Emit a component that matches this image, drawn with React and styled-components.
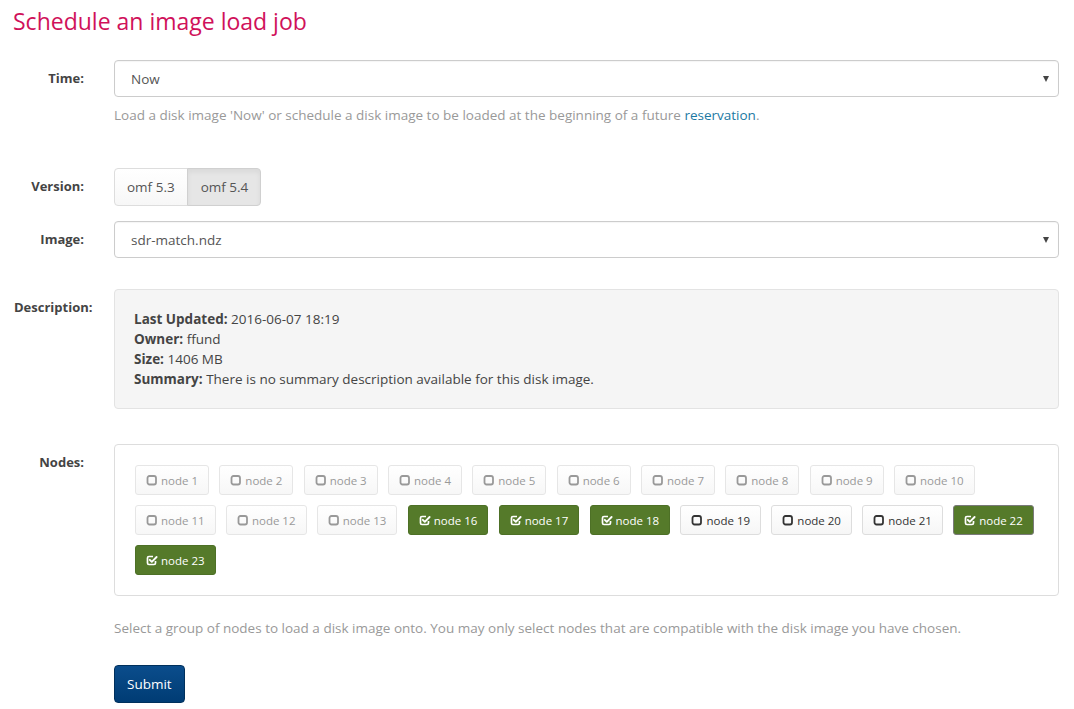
import React, { useState } from "react";
import styled, { createGlobalStyle, css } from "styled-components";

const GlobalStyle = createGlobalStyle`
  html, body {
    margin: 0;
    padding: 0;
    background: #fff;
  }
  body {
    font-family: "Open Sans", "Noto Sans", sans-serif;
    font-size: 13.5px;
    line-height: 20px;
    color: #555;
  }
  * {
    box-sizing: border-box;
  }
`;

const Page = styled.div`
  padding: 8px 15px 0 14px;
`;

const Title = styled.h2`
  margin: 0 0 26px -1px;
  font-size: 23px;
  line-height: 26px;
  font-weight: 400;
  color: #d0115a;
`;

const Row = styled.div`
  display: grid;
  grid-template-columns: 70px 1fr;
  column-gap: 30px;
  margin-top: ${({ $gap }) => $gap || 0}px;
`;

const Label = styled.label`
  padding-top: 8px;
  text-align: right;
  white-space: nowrap;
  font-weight: 700;
  font-size: 13px;
  color: #444;
`;

const Field = styled.div`
  min-width: 0;
`;

const Select = styled.div`
  display: flex;
  align-items: center;
  justify-content: space-between;
  height: 37px;
  padding: 0 9px 0 16px;
  border: 1px solid #ccc;
  border-radius: 4px;
  background: #fff;
  color: #555;
  box-shadow: inset 0 1px 1px rgba(0, 0, 0, 0.04);
  cursor: pointer;
`;

const Caret = styled.span`
  width: 0;
  height: 0;
  border-left: 3.5px solid transparent;
  border-right: 3.5px solid transparent;
  border-top: 6px solid #444;
`;

const Help = styled.p`
  margin: ${({ $top }) => $top || 8}px 0 0;
  color: #999;
`;

const Link = styled.a`
  color: #1b79a3;
  text-decoration: none;
`;

const Group = styled.div`
  display: inline-flex;
`;

const GroupButton = styled.button`
  height: 38px;
  padding: 0 12px;
  font: inherit;
  color: #555;
  border: 1px solid #ddd;
  background: ${({ $active }) =>
    $active ? "#e6e6e6" : "linear-gradient(#fff, #f7f7f7)"};
  box-shadow: ${({ $active }) =>
    $active ? "inset 0 3px 5px rgba(0,0,0,0.06)" : "none"};
  border-color: ${({ $active }) => ($active ? "#d0d0d0" : "#ddd")};
  cursor: pointer;
  &:first-child {
    border-radius: 4px 0 0 4px;
  }
  &:last-child {
    border-radius: 0 4px 4px 0;
    margin-left: -1px;
    padding: 0 12px 0 13px;
  }
`;

const Well = styled.div`
  padding: 19px 19px;
  background: #f5f5f5;
  border: 1px solid #e3e3e3;
  border-radius: 4px;
  color: #444;
`;

const Key = styled.b`
  font-weight: 700;
  color: #444;
`;

const NodeBox = styled.div`
  display: flex;
  flex-wrap: wrap;
  gap: 10px 10.3px;
  padding: 20px;
  border: 1px solid #ddd;
  border-radius: 4px;
  background: #fff;
`;

const NodeButton = styled.button`
  display: inline-flex;
  align-items: center;
  gap: 3px;
  height: 30px;
  padding: 0 10px;
  font-family: inherit;
  font-size: 11.5px;
  border-radius: 3px;
  cursor: pointer;
  ${({ $state }) =>
    $state === "on"
      ? css`
          color: #fff;
          background: #557a2a;
          border: 1px solid #4d7026;
        `
      : $state === "focus"
      ? css`
          color: #fff;
          background: #557a2a;
          border: 1px solid #7a7a7a;
        `
      : $state === "off"
      ? css`
          color: #333;
          background: linear-gradient(#fff, #f6f6f6);
          border: 1px solid #ddd;
        `
      : css`
          color: #999;
          background: linear-gradient(#fff, #f7f7f7);
          border: 1px solid #e6e6e6;
          cursor: not-allowed;
        `}
`;

const Submit = styled.button`
  height: 38px;
  margin-top: 27px;
  padding: 0 12px;
  font: inherit;
  color: #fff;
  border: 1px solid #00305c;
  border-radius: 4px;
  background: linear-gradient(#0b4d8c, #003c74);
  cursor: pointer;
`;

const BoxIcon = ({ checked }) => (
  <svg width="12" height="12" viewBox="0 0 12 12" fill="none">
    {checked ? (
      <>
        <path
          d="M7 2.5 H3 a1.5 1.5 0 0 0 -1.5 1.5 V9 a1.5 1.5 0 0 0 1.5 1.5 H8 a1.5 1.5 0 0 0 1.5 -1.5 V7"
          stroke="currentColor"
          strokeWidth="1.7"
        />
        <path
          d="M3.8 5.8 L5.8 7.8 L10.6 3"
          stroke="currentColor"
          strokeWidth="1.9"
          strokeLinecap="round"
          strokeLinejoin="round"
        />
      </>
    ) : (
      <rect
        x="1.5"
        y="2"
        width="8.5"
        height="8.5"
        rx="2"
        stroke="currentColor"
        strokeWidth="1.8"
      />
    )}
  </svg>
);

const nodes = [
  [1, "disabled"],
  [2, "disabled"],
  [3, "disabled"],
  [4, "disabled"],
  [5, "disabled"],
  [6, "disabled"],
  [7, "disabled"],
  [8, "disabled"],
  [9, "disabled"],
  [10, "disabled"],
  [11, "disabled"],
  [12, "disabled"],
  [13, "disabled"],
  [16, "on"],
  [17, "on"],
  [18, "on"],
  [19, "off"],
  [20, "off"],
  [21, "off"],
  [22, "focus"],
  [23, "on"],
];

const App = () => {
  const [version, setVersion] = useState("5.4");

  return (
    <Page>
      <GlobalStyle />
      <Title>Schedule an image load job</Title>

      <Row>
        <Label>Time:</Label>
        <Field>
          <Select>
            <span>Now</span>
            <Caret />
          </Select>
          <Help>
            Load a disk image 'Now' or schedule a disk image to be loaded at the
            beginning of a future <Link href="#">reservation</Link>.
          </Help>
        </Field>
      </Row>

      <Row $gap={43}>
        <Label>Version:</Label>
        <Field>
          <Group>
            {["5.3", "5.4"].map((v) => (
              <GroupButton
                key={v}
                $active={version === v}
                onClick={() => setVersion(v)}
              >
                omf {v}
              </GroupButton>
            ))}
          </Group>
        </Field>
      </Row>

      <Row $gap={15}>
        <Label>Image:</Label>
        <Field>
          <Select>
            <span>sdr-match.ndz</span>
            <Caret />
          </Select>
        </Field>
      </Row>

      <Row $gap={31}>
        <Label>Description:</Label>
        <Field>
          <Well>
            <div>
              <Key>Last Updated:</Key> 2016-06-07 18:19
            </div>
            <div>
              <Key>Owner:</Key> ffund
            </div>
            <div>
              <Key>Size:</Key> 1406 MB
            </div>
            <div>
              <Key>Summary:</Key> There is no summary description available for
              this disk image.
            </div>
          </Well>
        </Field>
      </Row>

      <Row $gap={35}>
        <Label>Nodes:</Label>
        <Field>
          <NodeBox>
            {nodes.map(([n, state]) => (
              <NodeButton key={n} $state={state} disabled={state === "disabled"}>
                <BoxIcon checked={state === "on" || state === "focus"} />
                node {n}
              </NodeButton>
            ))}
          </NodeBox>
          <Help $top={22}>
            Select a group of nodes to load a disk image onto. You may only
            select nodes that are compatible with the disk image you have
            chosen.
          </Help>
          <Submit>Submit</Submit>
        </Field>
      </Row>
    </Page>
  );
};

export default App;
